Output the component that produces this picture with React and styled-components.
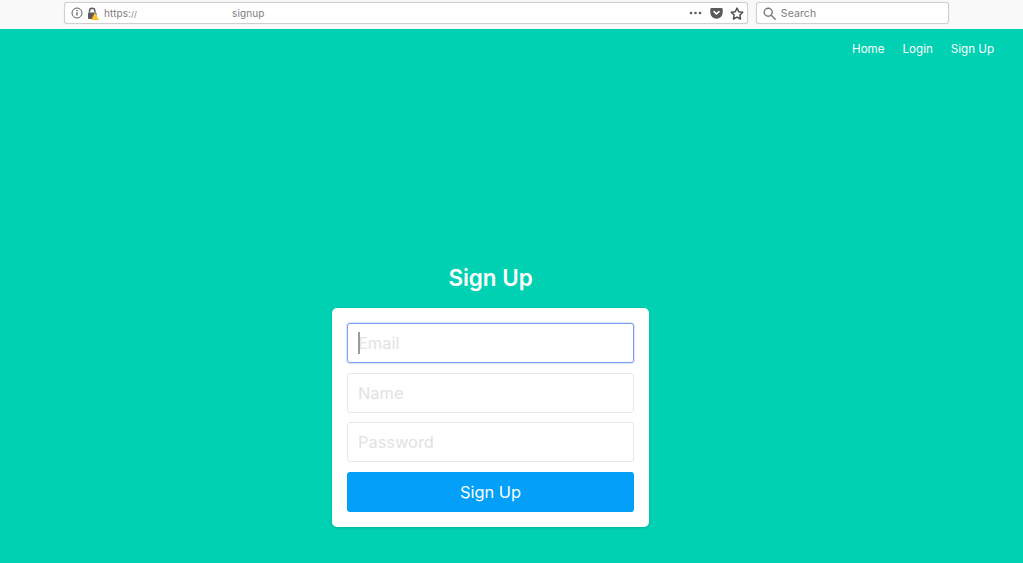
import { createGlobalStyle, styled } from "styled-components";

const GlobalStyle = createGlobalStyle`
  html, body {
    margin: 0;
    padding: 0;
    height: 100%;
    overflow: hidden;
    background: #00d1b2;
    font-family: Inter, "Liberation Sans", sans-serif;
  }
`;

const Toolbar = styled.div`
  height: 28.5px;
  box-sizing: border-box;
  padding: 2px 73.7px 0 64px;
  display: flex;
  gap: 8px;
  background: #f9f9fa;
`;

const ToolBox = styled.div`
  flex: ${(props) => (props.$grow ? 1 : "none")};
  width: ${(props) => (props.$grow ? "auto" : "193px")};
  height: 22px;
  box-sizing: border-box;
  display: flex;
  align-items: center;
  padding: 0 3px 0 6px;
  border: 1px solid #cfcfd1;
  border-radius: 3px;
  background: #fff;
  box-shadow: 0 0 1px rgba(0, 0, 0, 0.18);
  font-size: 10px;
  letter-spacing: 0.1px;
  color: #7d7d80;
`;

const UrlLead = styled.span`
  margin-left: 5px;
  width: 128px;
`;

const UrlSlashes = styled.span`
  font-size: 8px;
`;

const Spacer = styled.span`
  flex: 1;
`;

const ToolIcons = styled.div`
  display: flex;
  align-items: center;
  gap: ${(props) => props.$gap}px;
`;

const SearchText = styled.span`
  margin-left: 4.5px;
  font-size: 10.5px;
`;

const Nav = styled.nav`
  display: flex;
  justify-content: flex-end;
  gap: 18px;
  padding: 13.5px 29px 0 0;
  height: 35px;
  box-sizing: border-box;
`;

const NavLink = styled.a`
  color: #fff;
  font-size: 11.6px;
  line-height: 15px;
`;

const Main = styled.main`
  display: flex;
  flex-direction: column;
  align-items: center;
  padding: 199px 42px 0 0;
`;

const Title = styled.h1`
  margin: 0 0 16.5px;
  color: #fff;
  font-size: 22.4px;
  line-height: 29px;
  font-weight: 600;
`;

const Card = styled.form`
  width: 317px;
  box-sizing: border-box;
  padding: 15px;
  display: flex;
  flex-direction: column;
  gap: 9.5px;
  border-radius: 5px;
  background: #fff;
  box-shadow: 0 1px 3px rgba(10, 10, 10, 0.14);
`;

const Field = styled.div`
  position: relative;
`;

const Input = styled.input`
  display: block;
  width: 100%;
  height: 40px;
  box-sizing: border-box;
  padding: 0.5px 10px 0;
  border: 1.5px solid ${(props) => (props.$focused ? "#7a9ff5" : "#e8e8e8")};
  border-radius: 3px;
  outline: none;
  box-shadow: ${(props) => (props.$focused ? "0 0 0 1px #dbe5fb" : "none")};
  font-family: inherit;
  font-size: 16.4px;

  &::placeholder {
    color: #e2e2e2;
    opacity: 1;
  }
`;

const Caret = styled.span`
  position: absolute;
  left: 11px;
  top: 9px;
  width: 1.5px;
  height: 22px;
  background: #9a9a9a;
`;

const Submit = styled.button`
  height: 40px;
  border: none;
  border-radius: 3px;
  background: #039ff8;
  color: #fff;
  font-family: inherit;
  font-size: 16.4px;
`;

const InfoIcon = () => (
  <svg width="12" height="12" viewBox="0 0 12 12" fill="none" stroke="#5f5f62" strokeWidth="1">
    <circle cx="6" cy="6" r="5" />
    <path d="M6 5.2v3.4" strokeWidth="1.3" />
    <path d="M6 3v1.2" strokeWidth="1.3" />
  </svg>
);

const LockIcon = () => (
  <svg width="12" height="13" viewBox="0 0 12 13">
    <path d="M2.5 5.5V4a2.7 2.7 0 0 1 5.4 0v1.5" fill="none" stroke="#5a5a5d" strokeWidth="1.4" />
    <rect x="1" y="5.5" width="8.5" height="6.5" rx="1" fill="#5a5a5d" />
    <path d="M8 5.5l4 7.5H4z" fill="#ffc02e" />
  </svg>
);

const DotsIcon = () => (
  <svg width="13" height="12" viewBox="0 0 13 12" fill="#5a5a5d">
    <circle cx="2" cy="6" r="1.3" />
    <circle cx="6.5" cy="6" r="1.3" />
    <circle cx="11" cy="6" r="1.3" />
  </svg>
);

const PocketIcon = () => (
  <svg width="13" height="12" viewBox="0 0 13 12">
    <path d="M1.5 1h10A1.2 1.2 0 0 1 12.7 2.2V5.5a6.2 6.2 0 0 1-12.4 0V2.2A1.2 1.2 0 0 1 1.5 1z" fill="#5a5a5d" />
    <path d="M4 4.6l2.5 2.3L9 4.6" fill="none" stroke="#fff" strokeWidth="1.5" strokeLinecap="round" strokeLinejoin="round" />
  </svg>
);

const StarIcon = () => (
  <svg width="14" height="13" viewBox="0 0 15 14" fill="none" stroke="#4f4f52" strokeWidth="1.6" strokeLinejoin="round">
    <path d="M7.5 1.2l1.9 3.9 4.3.6-3.1 3 .7 4.2-3.8-2-3.8 2 .7-4.2-3.1-3 4.3-.6z" />
  </svg>
);

const SearchIcon = () => (
  <svg width="13" height="13" viewBox="0 0 13 13" fill="none" stroke="#77777a" strokeWidth="1.4" strokeLinecap="round">
    <circle cx="5.2" cy="5.2" r="4" />
    <path d="M8.2 8.2l4 4" />
  </svg>
);

export default function App() {
  return (
    <>
      <GlobalStyle />
      <Toolbar>
        <ToolBox $grow>
          <ToolIcons $gap={4}>
            <InfoIcon />
            <LockIcon />
          </ToolIcons>
          <UrlLead>
            https:<UrlSlashes>//</UrlSlashes>
          </UrlLead>
          <span>signup</span>
          <Spacer />
          <ToolIcons $gap={7.5}>
            <DotsIcon />
            <PocketIcon />
            <StarIcon />
          </ToolIcons>
        </ToolBox>
        <ToolBox>
          <SearchIcon />
          <SearchText>Search</SearchText>
        </ToolBox>
      </Toolbar>
      <Nav>
        <NavLink>Home</NavLink>
        <NavLink>Login</NavLink>
        <NavLink>Sign Up</NavLink>
      </Nav>
      <Main>
        <Title>Sign Up</Title>
        <Card>
          <Field>
            <Input $focused placeholder="Email" />
            <Caret />
          </Field>
          <Input placeholder="Name" />
          <Input placeholder="Password" />
          <Submit type="button">Sign Up</Submit>
        </Card>
      </Main>
    </>
  );
}
